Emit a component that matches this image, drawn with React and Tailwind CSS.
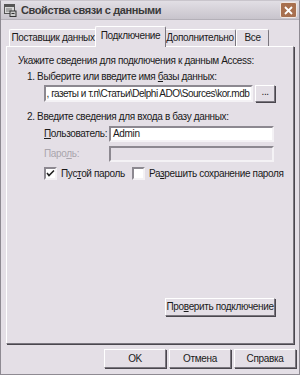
import React from "react";

const font = { fontFamily: '"Liberation Sans", Arial, sans-serif' };

const U = ({ children }) => <span className="underline underline-offset-[1px]">{children}</span>;

const Raised = ({ className = "", children }) => (
  <div
    className={
      "flex items-center justify-center whitespace-nowrap border border-t-white border-l-white border-r-[#7a767e] border-b-[#7a767e] shadow-[1px_1px_0_#4a474e] bg-[#e4dfe6] text-[#1a1a1a] " +
      className
    }
  >
    {children}
  </div>
);

const Sunken = ({ className = "", children, disabled }) => (
  <div
    className={
      "flex items-center border-2 border-t-[#8c8890] border-l-[#8c8890] border-r-[#f4f2f5] border-b-[#f4f2f5] px-[2px] overflow-hidden whitespace-nowrap " +
      (disabled ? "bg-[#e4dfe6] " : "bg-white ") +
      className
    }
  >
    {children}
  </div>
);

const Check = ({ checked }) => (
  <div className="w-[13px] h-[13px] shrink-0 bg-white border-2 border-t-[#8c8890] border-l-[#8c8890] border-r-[#f4f2f5] border-b-[#f4f2f5] flex items-center justify-center">
    {checked && (
      <svg width="9" height="9" viewBox="0 0 9 9">
        <path d="M1 4 L3 6.5 L8 1.5" stroke="#222" strokeWidth="1.6" fill="none" />
      </svg>
    )}
  </div>
);

const Tab = ({ label, w, active }) => (
  <div
    className={
      "flex items-center justify-center whitespace-nowrap border-t border-l border-t-white border-l-white border-r border-r-[#7a767e] rounded-t-[2px] bg-[#e4dfe6] " +
      w +
      (active ? " h-[21px] -mx-[2px] z-10 -mb-px pb-[2px]" : " h-[17px]")
    }
  >
    {label}
  </div>
);

export default function App() {
  return (
    <div
      style={font}
      className="w-[300px] h-[375px] bg-[#e4dfe6] flex flex-col text-[10px] tracking-[-0.35px] leading-[12px] text-[#1a1a1a] border border-[#8e8a92] border-t-[#c9c5cc] overflow-hidden"
    >
      {/* title bar */}
      <div className="h-[19px] shrink-0 flex items-center bg-gradient-to-b from-[#e2dfe5] to-[#c8c4cc] border-b border-[#b4b0b8] pl-[3px] pr-[2px]">
        <svg width="13" height="13" viewBox="0 0 13 13" className="mr-[4px]">
          <rect x="0.5" y="0.5" width="10" height="9" fill="#d8d8d8" stroke="#555" />
          <rect x="1" y="1" width="9" height="2" fill="#555" />
          <path d="M2 5h6M2 7h6" stroke="#777" />
          <rect x="6" y="7" width="6" height="5.5" fill="#ccc" stroke="#333" />
          <path d="M7.5 9.5h3" stroke="#333" />
        </svg>
        <span className="font-bold text-[11px] tracking-[-0.4px] text-[#3a3a3a] flex-1">
          Свойства связи с данными
        </span>
        <div className="w-[17px] h-[16px] rounded-[2px] bg-[#a8704f] border border-[#f0e8e4] flex items-center justify-center">
          <svg width="9" height="9" viewBox="0 0 9 9">
            <path d="M1 1L8 8M8 1L1 8" stroke="white" strokeWidth="1.8" />
          </svg>
        </div>
      </div>

      <div className="flex-1 flex flex-col px-[5px] pt-[5px]">
        {/* tabs */}
        <div className="flex items-end pl-[3px] h-[21px]">
          <Tab label="Поставщик данных" w="w-[88px]" />
          <Tab label="Подключение" w="w-[71px]" active />
          <Tab label="Дополнительно" w="w-[72px]" />
          <Tab label="Все" w="w-[33px]" />
        </div>

        {/* panel */}
        <div className="h-[298px] border border-t-white border-l-white border-r-[#7a767e] border-b-[#7a767e] shadow-[1px_1px_0_#4a474e] flex flex-col pl-[11px] pr-[18px] pt-[8px] whitespace-nowrap">
          <div>Укажите сведения для подключения к данным Access:</div>
          <div className="pl-[9px] mt-[4px]">
            1. Выберите или введите имя <U>б</U>азы данных:
          </div>
          <div className="flex items-center pl-[26px] mt-[2px] gap-[2px]">
            <Sunken className="w-[213px] h-[17px] justify-end tracking-[-0.5px]">
              , газеты и т.п\Статьи\Delphi ADO\Sources\kor.mdb
            </Sunken>
            <Raised className="w-[20px] h-[17px] pb-[3px]">...</Raised>
          </div>
          <div className="pl-[9px] mt-[9px]">2. Введите сведения для входа в базу данных:</div>
          <div className="flex items-center pl-[26px] mt-[3px]">
            <span className="w-[65px]">
              <U>П</U>ользователь:
            </span>
            <Sunken className="w-[165px] h-[16px]">Admin</Sunken>
          </div>
          <div className="flex items-center pl-[26px] mt-[4px]">
            <span className="w-[65px] text-[#a9a5ad]">
              Паро<U>л</U>ь:
            </span>
            <Sunken disabled className="w-[165px] h-[16px]" />
          </div>
          <div className="flex items-center pl-[26px] mt-[5px]">
            <Check checked />
            <span className="ml-[4px] w-[71px] shrink-0">
              Пус<U>т</U>ой пароль
            </span>
            <Check />
            <span className="ml-[4px] shrink-0">
              Ра<U>з</U>решить сохранение пароля
            </span>
          </div>
          <div className="flex-1" />
          <div className="flex justify-end mb-[27px]">
            <Raised className="w-[110px] h-[18px]">
              Про<U>в</U>ерить подключение
            </Raised>
          </div>
        </div>

        {/* bottom buttons */}
        <div className="flex justify-end gap-[3px] mt-[5px] -mr-[2px]">
          <Raised className="w-[62px] h-[19px]">OK</Raised>
          <Raised className="w-[62px] h-[19px]">Отмена</Raised>
          <Raised className="w-[62px] h-[19px]">Справка</Raised>
        </div>
      </div>
    </div>
  );
}
